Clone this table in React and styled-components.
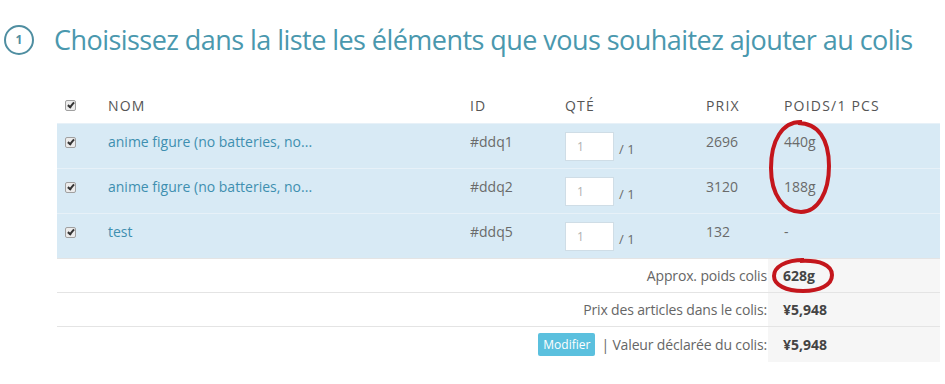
import React from 'react';
import styled, { createGlobalStyle } from 'styled-components';

const items = [
  { name: 'anime figure (no batteries, no...', id: '#ddq1', qty: 1, max: 1, price: '2696', weight: '440g' },
  { name: 'anime figure (no batteries, no...', id: '#ddq2', qty: 1, max: 1, price: '3120', weight: '188g' },
  { name: 'test', id: '#ddq5', qty: 1, max: 1, price: '132', weight: '-' },
];

const COLS = '51px 362px 95px 141px 78px 156px';

export default function App() {
  return (
    <Page>
      <GlobalStyle />
      <Title>
        <StepBadge>1</StepBadge>
        <TitleText>Choisissez dans la liste les éléments que vous souhaitez ajouter au colis</TitleText>
      </Title>
      <Table>
        <HeadRow>
          <CheckCell><Check /></CheckCell>
          <HeadCell>Nom</HeadCell>
          <HeadCell>ID</HeadCell>
          <HeadCell>Qté</HeadCell>
          <HeadCell>Prix</HeadCell>
          <HeadCell>Poids/1 pcs</HeadCell>
        </HeadRow>
        {items.map((it) => (
          <ItemRow key={it.id}>
            <CheckCell><Check /></CheckCell>
            <Cell><ItemLink href="#">{it.name}</ItemLink></Cell>
            <Cell>{it.id}</Cell>
            <QtyCell>
              <QtyInput>{it.qty}</QtyInput>
              <QtyMax>/ {it.max}</QtyMax>
            </QtyCell>
            <Cell>{it.price}</Cell>
            <Cell>{it.weight}</Cell>
          </ItemRow>
        ))}
        <SummaryRow>
          <SummaryLabel>Approx. poids colis</SummaryLabel>
          <SummaryValue>628g</SummaryValue>
        </SummaryRow>
        <SummaryRow>
          <SummaryLabel>Prix des articles dans le colis:</SummaryLabel>
          <SummaryValue>¥5,948</SummaryValue>
        </SummaryRow>
        <SummaryRow $last>
          <SummaryLabel>
            <ModifyButton>Modifier</ModifyButton>
            <span>| Valeur déclarée du colis:</span>
          </SummaryLabel>
          <SummaryValue>¥5,948</SummaryValue>
        </SummaryRow>
        <Mark $left={710} $top={29} $w={66} $h={96} viewBox="0 0 66 96">
          <path d="M35 3 C15 2 4 22 4 49 C4 76 17 93 34 93 C51 93 62 73 62 47 C62 20 51 4 31 4" />
        </Mark>
        <Mark $left={714} $top={167} $w={64} $h={37} viewBox="0 0 64 37">
          <path d="M33 3 C14 3 3 10 3 19 C3 28 15 34 32 34 C49 34 61 28 61 18 C61 8 49 3 29 4" />
        </Mark>
      </Table>
    </Page>
  );
}

const GlobalStyle = createGlobalStyle`
  body {
    margin: 0;
    background: #fff;
    font-family: "Open Sans", "Liberation Sans", sans-serif;
  }
`;

const Page = styled.div`
  width: 945px;
  height: 384px;
  overflow: hidden;
`;

const Title = styled.div`
  display: flex;
  align-items: center;
  gap: 20px;
  padding: 24px 0 0 4px;
  height: 31px;
`;

const StepBadge = styled.div`
  width: 30px;
  height: 30px;
  box-sizing: border-box;
  border: 2px solid #4f8ea1;
  border-radius: 50%;
  display: flex;
  align-items: center;
  justify-content: center;
  font-size: 12px;
  font-weight: 700;
  color: #4f8ea1;
`;

const TitleText = styled.h1`
  margin: 0;
  font-size: 27px;
  font-weight: 400;
  letter-spacing: -0.55px;
  color: #4a98ae;
  white-space: nowrap;
`;

const Table = styled.div`
  position: relative;
  margin: 35px 0 0 57px;
  width: 883px;
  font-size: 14px;
  color: #6a6a6a;
`;

const RowBase = styled.div`
  display: grid;
  grid-template-columns: ${COLS};
`;

const HeadRow = styled(RowBase)`
  height: 33px;
  align-items: center;
  padding-bottom: 3px;
  box-sizing: border-box;
`;

const ItemRow = styled(RowBase)`
  height: 45px;
  background: #d8eaf5;
  border-top: 1px solid #e7f1f8;
  box-sizing: border-box;
`;

const Cell = styled.div`
  padding-top: 8px;
  white-space: nowrap;
`;

const HeadCell = styled.div`
  font-size: 14px;
  font-weight: 400;
  text-transform: uppercase;
  letter-spacing: 1.2px;
  color: #555;
  white-space: nowrap;
`;

const CheckCell = styled.div`
  display: flex;
  align-items: center;
  padding-left: 8px;
  ${ItemRow} & {
    align-items: flex-start;
    padding-top: 13px;
  }
`;

const Check = styled.span`
  width: 9px;
  height: 9px;
  border: 1px solid #a0a0a0;
  border-radius: 2px;
  background: #ececec;
  position: relative;
  &::after {
    content: '';
    position: absolute;
    left: 3px;
    top: 0px;
    width: 2px;
    height: 5px;
    border: solid #333;
    border-width: 0 2px 2px 0;
    transform: rotate(40deg);
  }
`;

const ItemLink = styled.a`
  color: #3e8fb0;
  text-decoration: none;
`;

const QtyCell = styled.div`
  display: flex;
  align-items: center;
  gap: 5px;
  padding-top: 8px;
  align-self: start;
`;

const QtyInput = styled.div`
  width: 49px;
  height: 29px;
  box-sizing: border-box;
  background: #fff;
  border: 1px solid #cfdde6;
  padding-left: 11px;
  line-height: 27px;
  color: #b0b0b0;
  font-size: 12px;
`;

const QtyMax = styled.span`
  font-size: 13px;
  margin-top: 4px;
`;

const SummaryRow = styled.div`
  display: grid;
  grid-template-columns: 1fr 172px;
  height: ${(p) => (p.$last ? '36px' : '34px')};
  border-top: 1px solid #e4e4e4;
  box-sizing: border-box;
  &:first-of-type {
    border-top: none;
  }
`;

const SummaryLabel = styled.div`
  display: flex;
  align-items: center;
  justify-content: flex-end;
  gap: 6px;
  padding-right: 1px;
  font-size: 14px;
  letter-spacing: -0.15px;
  color: #666;
`;

const SummaryValue = styled.div`
  display: flex;
  align-items: center;
  padding-left: 15px;
  background: #f6f6f6;
  font-size: 14px;
  font-weight: 700;
  color: #444;
`;

const ModifyButton = styled.span`
  background: #5bc0de;
  color: #fff;
  font-size: 12px;
  letter-spacing: 0;
  padding: 3px 5px;
  border-radius: 2px;
`;

const Mark = styled.svg`
  position: absolute;
  left: ${(p) => p.$left}px;
  top: ${(p) => p.$top}px;
  width: ${(p) => p.$w}px;
  height: ${(p) => p.$h}px;
  fill: none;
  stroke: #c4161c;
  stroke-width: 4;
  pointer-events: none;
`;
